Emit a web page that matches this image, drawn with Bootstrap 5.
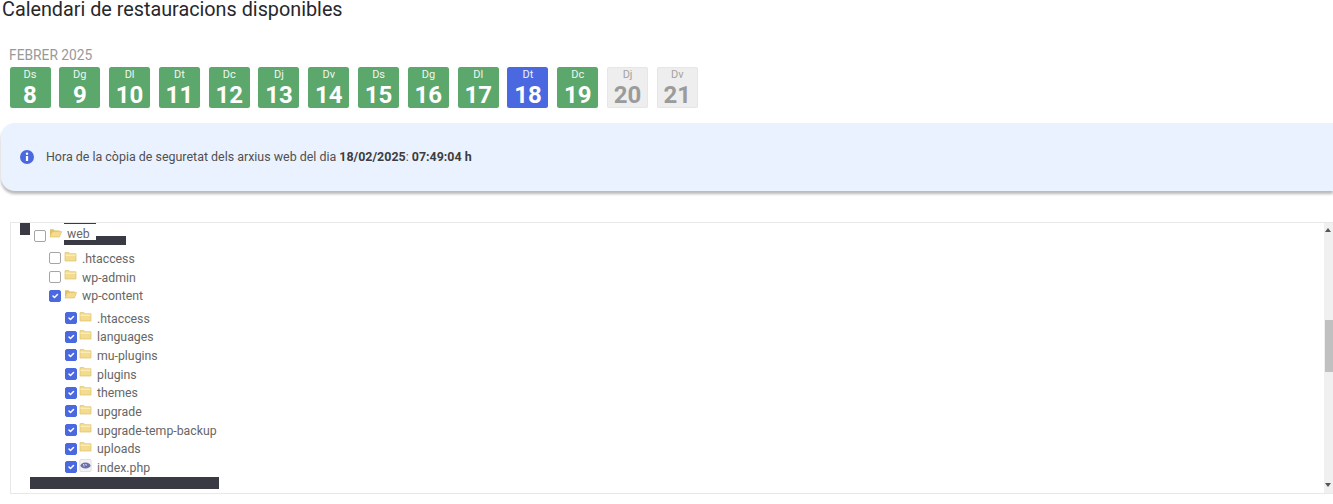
<!DOCTYPE html>
<html lang="ca">
<head>
<meta charset="utf-8">
<title>Calendari de restauracions disponibles</title>
<link href="https://cdn.jsdelivr.net/npm/bootstrap@5.3.0/dist/css/bootstrap.min.css" rel="stylesheet">
<style>
html,body{height:504px;overflow:hidden;background:#fff}
body{font-family:Roboto,"Liberation Sans",sans-serif;color:#555;position:relative}
.page-title{font-size:19.8px;font-weight:400;line-height:19px;height:20px;color:#26282c;margin:0;padding:0 0 0 2px}
.month-label{font-size:13.8px;line-height:16px;color:#999;margin:0;padding:27px 0 4px 9px}
.day-strip{gap:8.8px;padding-left:9.5px}
.day-tile{width:41px;height:41px;border-radius:2.5px;background:#5ca76b;color:#fff;text-align:center;padding-top:.5px}
.day-tile.today{background:#4a68e0}
.day-tile.off{background:#eee;color:#9b9b9b;box-shadow:inset 0 0 0 1px #e6e6e6}
.day-name{display:block;font-size:11px;line-height:13px;opacity:.9}
.day-num{display:block;font-size:24px;font-weight:700;line-height:28px}
.info-box{margin:15px 0 0 1px;height:68px;background:#ebf2ff;border-radius:14px 0 0 14px;box-shadow:0 3px 3px rgba(0,0,0,.28);padding-left:19px;gap:12px;font-size:12.45px;color:#505050}
.info-box b{color:#3d3d3d;font-weight:700}
.tree-box{margin:31px 0 0 10px;height:272px;border:1px solid #e8e8e8;border-right:0;position:relative;overflow:hidden}
.tree-list{flex:1;font-size:12.3px;color:#666;list-style:none;margin:0;padding:1px 0 0}
.tree-row{height:18.65px;gap:3px}
.tree-row input.form-check-input{width:12px;height:12px;margin:0;border-radius:2px;border:1.5px solid #a5a5a5;background-color:#fff;flex:none;float:none}
.tree-row input.form-check-input:checked{background-color:#4a68e0;border-color:#4a68e0}
.tree-row svg{flex:none;margin-top:-4px}
.tree-row span{margin-left:2px;padding-top:2px}
.lvl0{padding-left:23px;height:20px;margin-bottom:5px}
.tree-row.lvl0 span{padding-top:0}
.tree-row.lvl0 input.form-check-input{margin-top:3px}
.lvl1{padding-left:38px}
.lvl1-last{margin-bottom:3.8px}
.lvl2{padding-left:54px;gap:2px}
.lvl2 span{margin-left:3px}
.scroll-rail{width:9px;background:#f0f0f0;position:relative;flex:none}
.scroll-thumb{position:absolute;top:97px;left:1px;right:0;height:52px;background:#c0c0c0}
.arrow-up,.arrow-down{position:absolute;left:1px;width:0;height:0;border-left:3.5px solid transparent;border-right:3.5px solid transparent}
.arrow-up{top:5px;border-bottom:4px solid #555}
.arrow-down{bottom:6px;border-top:4px solid #555}
.mask-bar{position:absolute;background:#3a3a45}
.mask-a{left:9px;top:0;width:10px;height:12px}
.mask-b{left:53px;top:-1px;width:32px;height:1.5px}
.mask-c{left:53px;top:17px;width:62px;height:5px}
.mask-e{left:85px;top:13px;width:30px;height:4px}
.mask-d{left:19px;top:254px;width:189px;height:12px}
</style>
</head>
<body>
<h1 class="page-title">Calendari de restauracions disponibles</h1>
<p class="month-label">FEBRER 2025</p>
<div class="d-flex day-strip">
  <div class="day-tile"><span class="day-name">Ds</span><span class="day-num">8</span></div>
  <div class="day-tile"><span class="day-name">Dg</span><span class="day-num">9</span></div>
  <div class="day-tile"><span class="day-name">Dl</span><span class="day-num">10</span></div>
  <div class="day-tile"><span class="day-name">Dt</span><span class="day-num">11</span></div>
  <div class="day-tile"><span class="day-name">Dc</span><span class="day-num">12</span></div>
  <div class="day-tile"><span class="day-name">Dj</span><span class="day-num">13</span></div>
  <div class="day-tile"><span class="day-name">Dv</span><span class="day-num">14</span></div>
  <div class="day-tile"><span class="day-name">Ds</span><span class="day-num">15</span></div>
  <div class="day-tile"><span class="day-name">Dg</span><span class="day-num">16</span></div>
  <div class="day-tile"><span class="day-name">Dl</span><span class="day-num">17</span></div>
  <div class="day-tile today"><span class="day-name">Dt</span><span class="day-num">18</span></div>
  <div class="day-tile"><span class="day-name">Dc</span><span class="day-num">19</span></div>
  <div class="day-tile off"><span class="day-name">Dj</span><span class="day-num">20</span></div>
  <div class="day-tile off"><span class="day-name">Dv</span><span class="day-num">21</span></div>
</div>
<div class="info-box d-flex align-items-center">
  <svg width="14" height="14" viewBox="0 0 14 14"><circle cx="7" cy="7" r="7" fill="#4a68e0"/><circle cx="7" cy="3.8" r="1.2" fill="#fff"/><rect x="5.9" y="6" width="2.2" height="5" fill="#fff"/></svg>
  <div>Hora de la còpia de seguretat dels arxius web del dia <b>18/02/2025</b>: <b>07:49:04 h</b></div>
</div>
<svg width="0" height="0" class="d-block position-absolute">
  <defs>
    <symbol id="fold-open" viewBox="0 0 13 11"><path d="M1 2.2h3.6l1 1.2h5v1.4H3.4L1 9.6z" fill="#dcc06a"/><path d="M3.3 4.6H12.6L10.4 10H1z" fill="#f5dc8c" stroke="#d8bb62" stroke-width=".6"/></symbol>
    <symbol id="fold-shut" viewBox="0 0 13 11"><path d="M1 1.6h4l1 1.2h6V10H1z" fill="#f3dc90" stroke="#dcc26c" stroke-width=".7"/><path d="M1.4 4.2h10.2" stroke="#fff2c4" stroke-width="1"/></symbol>
    <symbol id="php-file" viewBox="0 0 13 13"><rect x=".8" y=".5" width="11.4" height="12" rx="1" fill="#f2f2f4" stroke="#d6d6da" stroke-width=".7"/><ellipse cx="6.5" cy="6.5" rx="5" ry="3" fill="#6a6fa8"/><path d="M4 5.6h1v2M6.2 5.6h1.2v1" stroke="#fff" stroke-width=".7" fill="none"/></symbol>
  </defs>
</svg>
<div class="tree-box d-flex">
  <ul class="tree-list">
    <li class="tree-row lvl0 d-flex align-items-center"><input class="form-check-input" type="checkbox"><svg width="13" height="11"><use href="#fold-open"/></svg><span>web</span></li>
    <li class="tree-row lvl1 d-flex align-items-center"><input class="form-check-input" type="checkbox"><svg width="13" height="11"><use href="#fold-shut"/></svg><span>.htaccess</span></li>
    <li class="tree-row lvl1 d-flex align-items-center"><input class="form-check-input" type="checkbox"><svg width="13" height="11"><use href="#fold-shut"/></svg><span>wp-admin</span></li>
    <li class="tree-row lvl1 lvl1-last d-flex align-items-center"><input class="form-check-input" type="checkbox" checked><svg width="13" height="11"><use href="#fold-open"/></svg><span>wp-content</span></li>
    <li class="tree-row lvl2 d-flex align-items-center"><input class="form-check-input" type="checkbox" checked><svg width="13" height="11"><use href="#fold-shut"/></svg><span>.htaccess</span></li>
    <li class="tree-row lvl2 d-flex align-items-center"><input class="form-check-input" type="checkbox" checked><svg width="13" height="11"><use href="#fold-shut"/></svg><span>languages</span></li>
    <li class="tree-row lvl2 d-flex align-items-center"><input class="form-check-input" type="checkbox" checked><svg width="13" height="11"><use href="#fold-shut"/></svg><span>mu-plugins</span></li>
    <li class="tree-row lvl2 d-flex align-items-center"><input class="form-check-input" type="checkbox" checked><svg width="13" height="11"><use href="#fold-shut"/></svg><span>plugins</span></li>
    <li class="tree-row lvl2 d-flex align-items-center"><input class="form-check-input" type="checkbox" checked><svg width="13" height="11"><use href="#fold-shut"/></svg><span>themes</span></li>
    <li class="tree-row lvl2 d-flex align-items-center"><input class="form-check-input" type="checkbox" checked><svg width="13" height="11"><use href="#fold-shut"/></svg><span>upgrade</span></li>
    <li class="tree-row lvl2 d-flex align-items-center"><input class="form-check-input" type="checkbox" checked><svg width="13" height="11"><use href="#fold-shut"/></svg><span>upgrade-temp-backup</span></li>
    <li class="tree-row lvl2 d-flex align-items-center"><input class="form-check-input" type="checkbox" checked><svg width="13" height="11"><use href="#fold-shut"/></svg><span>uploads</span></li>
    <li class="tree-row lvl2 d-flex align-items-center"><input class="form-check-input" type="checkbox" checked><svg width="13" height="13"><use href="#php-file"/></svg><span>index.php</span></li>
  </ul>
  <div class="scroll-rail"><div class="arrow-up"></div><div class="scroll-thumb"></div><div class="arrow-down"></div></div>
  <div class="mask-bar mask-a"></div>
  <div class="mask-bar mask-b"></div>
  <div class="mask-bar mask-c"></div>
  <div class="mask-bar mask-e"></div>
  <div class="mask-bar mask-d"></div>
</div>
<script src="https://cdn.jsdelivr.net/npm/bootstrap@5.3.0/dist/js/bootstrap.bundle.min.js"></script>
</body>
</html>
